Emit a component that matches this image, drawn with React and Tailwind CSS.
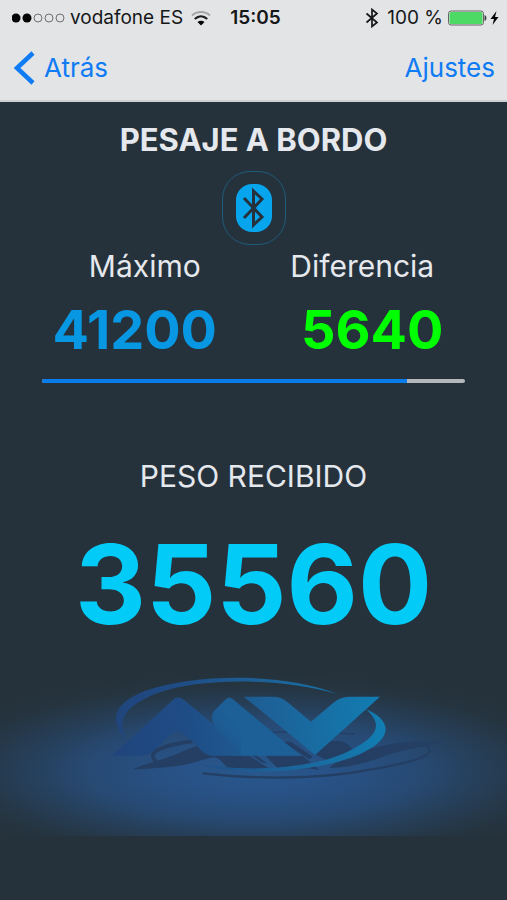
const maximum = 41200;
const received = 35560;
const difference = maximum - received;

function StatusBar() {
    return (
        <div className="grid h-9 grid-cols-[1fr_auto_1fr] items-center pl-3 pr-2 text-[19px] leading-6 text-[#161719]">
            <div className="flex items-center">
                <svg width="54" height="12" viewBox="0 0 54 12" className="mr-1" aria-hidden="true">
                    <circle cx="4" cy="6" r="4.5" fill="#050505" />
                    <circle cx="15" cy="6" r="4.5" fill="#050505" />
                    <circle cx="26" cy="6" r="4" fill="none" stroke="#6d6f71" />
                    <circle cx="37" cy="6" r="4" fill="none" stroke="#6d6f71" />
                    <circle cx="48" cy="6" r="4" fill="none" stroke="#6d6f71" />
                </svg>
                <span className="whitespace-nowrap">vodafone ES</span>
                <svg width="20" height="15" viewBox="0 0 20 15" fill="none" className="ml-2" aria-hidden="true">
                    <path d="M1 4.5C6 -.2 14 -.2 19 4.5" stroke="#a3a5a7" strokeWidth="1.8" />
                    <path d="M3.8 8C7.5 4.6 12.5 4.6 16.2 8" stroke="#1b1c1e" strokeWidth="2.2" />
                    <path d="M6.5 11C8.5 9.2 11.5 9.2 13.5 11L10 14.5Z" fill="#050505" />
                </svg>
            </div>
            <span className="font-semibold">15:05</span>
            <div className="flex items-center justify-end">
                <svg width="14" height="20" viewBox="0 0 14 20" fill="none" stroke="#161719" strokeWidth="1.7" className="mr-2" aria-hidden="true">
                    <path d="M1.5 5.5L12 14.5L7 18.5V1.5L12 5.5L1.5 14.5" />
                </svg>
                <span className="whitespace-nowrap">100 %</span>
                <svg width="52" height="18" viewBox="0 0 52 18" className="ml-1" aria-hidden="true">
                    <rect x="1.5" y="2" width="35" height="14" rx="2.5" fill="#e2e4e6" stroke="#626466" />
                    <rect x="2.5" y="3" width="33" height="12" rx="1.5" fill="#4cd964" />
                    <path d="M37.5 6Q39.5 6.5 39.5 9T37.5 12Z" fill="#444" />
                    <path d="M49.5 2L43.5 10H47L45.5 16L51.5 8H48Z" fill="#050505" />
                </svg>
            </div>
        </div>
    );
}

function NavBar() {
    return (
        <nav className="flex h-16 items-center justify-between px-3 text-[26px] leading-8 text-[#0f7bf5]">
            <a href="#atras" className="flex items-center gap-2">
                <svg width="24" height="34" viewBox="0 0 24 34" fill="none" stroke="currentColor" strokeWidth="4.5" aria-hidden="true">
                    <path d="M21 2L5 17L21 32" />
                </svg>
                <span>Atrás</span>
            </a>
            <a href="#ajustes">Ajustes</a>
        </nav>
    );
}

function Logo() {
    return (
        <svg viewBox="300 90 1062 339" className="h-[113px] w-[354px]" role="img" aria-label="MV">
            <defs>
                <linearGradient id="mv" gradientUnits="userSpaceOnUse" x1="340" y1="300" x2="1150" y2="200">
                    <stop offset="0" stopColor="#20457c" />
                    <stop offset="0.25" stopColor="#1f4b84" />
                    <stop offset="0.6" stopColor="#1c6399" />
                    <stop offset="1" stopColor="#117eb3" />
                </linearGradient>
                <linearGradient id="peak" gradientUnits="userSpaceOnUse" x1="590" y1="300" x2="680" y2="220">
                    <stop offset="0" stopColor="#1f4d85" />
                    <stop offset="0.45" stopColor="#205083" />
                    <stop offset="0.6" stopColor="#1e5a92" />
                    <stop offset="1" stopColor="#1d5f97" />
                </linearGradient>
            </defs>
            {/* shadow on the floor */}
            <g fill="#243f63">
                <path d="M395 388C430 372 475 362 520 345C570 325 590 312 640 315L690 348C620 348 600 365 550 374C510 382 450 386 395 388Z" />
                <path d="M635 347H745L803 385C760 388 710 386 680 384L660 362Z" />
                <path d="M698 304L712 303L800 372L780 366Z" />
                <path d="M793 347H905L955 390C910 380 870 388 830 385Z" />
                <path d="M845 305H870L935 350L925 358Z" />
                <path d="M940 342C975 300 995 302 1020 304C1042 310 1050 322 1056 333L985 365Z" />
                <path d="M985 384C1020 350 1060 338 1130 320C1200 303 1270 302 1332 303C1300 316 1220 325 1160 345C1110 364 1050 383 985 384Z" />
            </g>
            <g fill="none" stroke="#243f63">
                <path d="M590 302C500 312 450 330 456 350C458 362 465 368 482 374" strokeWidth="11" />
                <path d="M660 292C780 272 940 272 1060 282" strokeWidth="4" />
                <path d="M605 400C760 418 950 418 1090 392C1210 372 1290 352 1286 330Q1284 320 1270 315" strokeWidth="7" />
            </g>
            {/* ring */}
            <g fill="url(#mv)">
                <path d="M378 303C325 245 330 190 440 150C590 100 850 98 1012 163C860 117 620 110 480 156C365 195 345 248 378 303Z" />
                <path d="M1095 207C1170 240 1180 292 1085 338C970 395 720 415 585 370C720 398 930 388 1040 335C1136 287 1145 254 1095 207Z" />
                {/* letters */}
                <path d="M332 347L510 185Q530 162 552 182L650 264L720 347H635Q620 347 606 336L552 284Q530 266 508 284L455 335Q442 346 415 347Z" />
                <path d="M728 170H815Q840 170 858 185L930 245L1000 186Q1020 170 1050 170H1137L942 345Z" />
            </g>
            <path d="M720 347L640 262L633 235Q632 220 640 212L675 177Q685 168 695 177L720 198Z" fill="url(#peak)" />
            <path d="M719 197L900 347H719Z" fill="#1d6097" />
        </svg>
    );
}

function App() {
    return (
        <div className="flex min-h-screen flex-col bg-[#25323c] font-['Inter',sans-serif] text-[#e5e8ed]">
            <header className="border-b-2 border-[#cbd1d3] bg-[#e2e4e6]">
                <StatusBar />
                <NavBar />
            </header>

            <main className="flex flex-col items-center">
                <h1 className="mt-5 text-[31px] font-bold leading-9">PESAJE A BORDO</h1>

                <button type="button" aria-label="Bluetooth" className="mt-[13px] flex h-[74px] w-16 items-center justify-center rounded-[28px] border border-[#205b7b]">
                    <span className="flex rounded-2xl bg-[#08a5ef]">
                        <svg width="36" height="48" viewBox="0 0 36 48" fill="none" stroke="#25323c" strokeWidth="3" aria-hidden="true">
                            <path d="M8 14L26 33L17.5 41V7L26 15L8 34" />
                        </svg>
                    </span>
                </button>

                <div className="mt-px grid w-full grid-cols-2 px-9 text-center text-[30px] leading-10">
                    <span>Máximo</span>
                    <span>Diferencia</span>
                </div>
                <div className="mt-2 grid w-full grid-cols-2 px-4 text-center text-[54px] font-bold leading-[72px]">
                    <span className="text-[#0797e3]">{maximum}</span>
                    <span className="text-[#0f0]">{difference}</span>
                </div>

                <div className="mt-[13px] w-full px-[42px]">
                    <div
                        role="progressbar"
                        aria-label="Peso recibido"
                        aria-valuemin={0}
                        aria-valuemax={maximum}
                        aria-valuenow={received}
                        className="h-1 overflow-hidden rounded-full bg-[#b5b7b9]"
                    >
                        <div className="h-full bg-[#087cea]" style={{ width: `${(received / maximum) * 100}%` }} />
                    </div>
                </div>

                <h2 className="mt-[73px] text-[30px] leading-10">PESO RECIBIDO</h2>
                <p className="mt-4 text-[110px] font-bold leading-[144px] text-[#03cbf8]">{received}</p>

                {/* floor light */}
                <div className="flex h-[180px] w-full justify-center bg-[radial-gradient(ellipse_54%_44%_at_50%_64%,#28578b_0%,#285388_25%,#274a74_60%,#263e57_85%,#25343f_110%,#25323c_125%)] pl-12 pt-[14px]">
                    <Logo />
                </div>
            </main>
        </div>
    );
}

export default App;
